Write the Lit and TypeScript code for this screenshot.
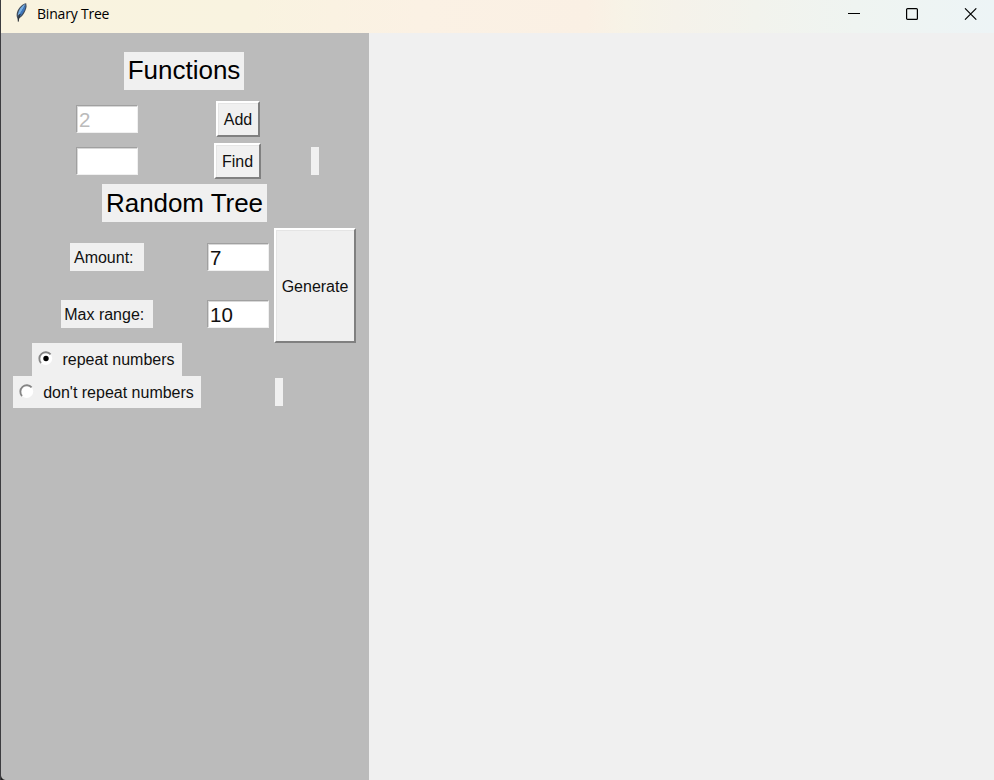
import { LitElement, html, svg, css, nothing } from "lit";
import { customElement } from "lit/decorators.js";

@customElement("app-root")
export class AppRoot extends LitElement {
  static styles = css`
    :host {
      display: flex;
      flex-direction: column;
      box-sizing: border-box;
      width: 994px;
      height: 780px;
      border-left: 1px solid #3c3c3f;
      background: #f0f0f0;
      color: #111;
      overflow: hidden;
      font: 16px/20px "Liberation Sans", Arial, sans-serif;
    }
    .titlebar {
      flex: none;
      height: 33px;
      display: flex;
      background: linear-gradient(90deg, #f9f3df 0%, #f9f3e0 25%, #fbf1e4 42%, #faf0e4 59%, #f7f3e7 63%, #f5f2ea 68%, #f2f3ed 76%, #eff4f1 86%, #edf4f6 100%);
    }
    .feather { flex: none; margin: 2px 0 0 12px; }
    .title {
      flex: 1;
      margin-left: 8px;
      font: 14px/27px "Open Sans", "Noto Sans", sans-serif;
      letter-spacing: -0.2px;
      color: #000;
    }
    .controls { flex: none; display: flex; gap: 46px; padding: 8px 17px 0 0; height: 12px; }
    .main { flex: 1; display: flex; min-height: 0; }
    .panel {
      box-sizing: border-box;
      width: 367.5px;
      padding: 13px 0 0 6px;
      background: radial-gradient(circle at 5px calc(100% - 5px), #bbb 6px, #222 6.5px) 0 100% / 5px 5px no-repeat, #bbb;
      display: grid;
      grid-template-columns: 200px 62px 92px;
      grid-template-rows: 49px 48px 35px 50px 57.5px 57.5px 33px 32px;
      align-content: start;
      align-items: center;
      justify-items: center;
    }
    .panel {
      background: radial-gradient(circle at 100% 0, #bbb 4.5px, #222 5.5px) 0 100% / 5px 5px no-repeat, #bbb;
    }
    .heading {
      grid-column: 1 / -1;
      box-sizing: border-box;
      height: 38px;
      padding: 0 4px;
      background: #f0f0f0;
      font-size: 26px;
      line-height: 37px;
      color: #000;
      white-space: nowrap;
    }
    .tree { line-height: 38px; letter-spacing: -0.05px; margin-left: 1px; }
    .entry {
      box-sizing: border-box;
      width: 62px;
      height: 28px;
      padding: 0 1px 0 2px;
      border: 1px solid;
      border-color: #a0a0a0 #f0f0f0 #f0f0f0 #a0a0a0;
      box-shadow: inset 1px 1px #d8d8d8;
      background: #fff;
      font-size: 20.5px;
      line-height: 27px;
    }
    .entry.off { color: #bbb; }
    .btn {
      box-sizing: border-box;
      height: 36px;
      display: flex;
      align-items: center;
      justify-content: center;
      background: #f0f0f0;
      border: 2px solid;
      border-color: #fff #808080 #808080 #fff;
      box-shadow: inset 1px 1px #e5e5e5;
    }
    .btn.small { padding-top: 2px; }
    .add { width: 44px; }
    .find { width: 47px; margin-left: -1px; }
    .gen { grid-area: 5 / 3 / 7 / 4; width: 82px; height: 115px; padding-top: 2px; }
    .label {
      height: 28px;
      padding: 0 10px 0 3.5px;
      line-height: 29px;
      background: #f0f0f0;
      white-space: nowrap;
    }
    .range { padding-right: 9px; }
    .blank { grid-column: 3; width: 8px; height: 28px; background: #f0f0f0; }
    .start { justify-self: start; margin: -1px 0 0 6px; }
    .radio {
      grid-column: 1;
      box-sizing: border-box;
      height: 100%;
      display: flex;
      align-items: center;
      gap: 9px;
      padding: 0 7px 0 6px;
      background: #f0f0f0;
      white-space: nowrap;
    }
    .radio svg { flex: none; margin-top: -2px; }
    .radio span { padding-top: 1px; }
  `;

  private entry(value: string, off = false) {
    return html`<div class="entry ${off ? "off" : ""}">${value}</div>`;
  }

  private radio(text: string, on: boolean) {
    return html`<div class="radio">
      <svg width="15" height="15" viewBox="0 0 15 15" fill="none">
        <circle cx="7.7" cy="7.5" r="6.5" fill="#fff" />
        <path d="M3 12A6.4 6.4 0 0 1 12.6 3.4" stroke="#858585" stroke-width="1.9" />
        ${on ? svg`<circle cx="8" cy="7.5" r="2.7" fill="#000" />` : nothing}
      </svg>
      <span>${text}</span>
    </div>`;
  }

  render() {
    return html`
      <div class="titlebar">
        <svg class="feather" width="16" height="21" viewBox="0 0 16 21">
          <path d="M13.2 1.2C9.5 1.8 5.6 5.5 4 10.2C3.4 12.4 3.5 14.5 4.4 16.6L5.2 20.2L6.2 16.2C9.5 15 12.8 9.5 13.6 4.5Z" fill="#414b59" />
          <path d="M12.4 2C8.6 4 5.5 7.8 4.7 13.4L7.4 11.5L10.5 6Z" fill="#75afe5" />
          <path d="M12.7 2.6C12.4 8 9.6 12.6 6.2 15L7.5 10.5Z" fill="#3d76bd" />
          <path d="M7.3 12C6.3 14 5.7 16 5.2 19.5" fill="none" stroke="#20242a" stroke-width=".8" />
        </svg>
        <div class="title">Binary Tree</div>
        <div class="controls">
          <svg width="12" height="12"><path d="M0 5.5H12" stroke="#000" /></svg>
          <svg width="12" height="12"><rect x=".6" y=".6" width="10.8" height="10.8" rx="1" fill="none" stroke="#000" stroke-width="1.2" /></svg>
          <svg width="13" height="12"><path d="M1 .3L12.3 11.7M12.3 .3L1 11.7" stroke="#000" stroke-width="1.1" /></svg>
        </div>
      </div>
      <div class="main">
        <div class="panel">
          <div class="heading">Functions</div>
          ${this.entry("2", true)}
          <div class="btn small add">Add</div><div></div>
          ${this.entry("")}
          <div class="btn small find">Find</div>
          <div class="blank"></div>
          <div class="heading tree">Random Tree</div>
          <div class="label">Amount:</div>
          ${this.entry("7")}
          <div class="btn gen">Generate</div>
          <div class="label range">Max range:</div>
          ${this.entry("10")}
          ${this.radio("repeat numbers", true)}
          ${this.radio("don't repeat numbers", false)}
          <div class="blank start"></div>
        </div>
      </div>
    `;
  }
}
